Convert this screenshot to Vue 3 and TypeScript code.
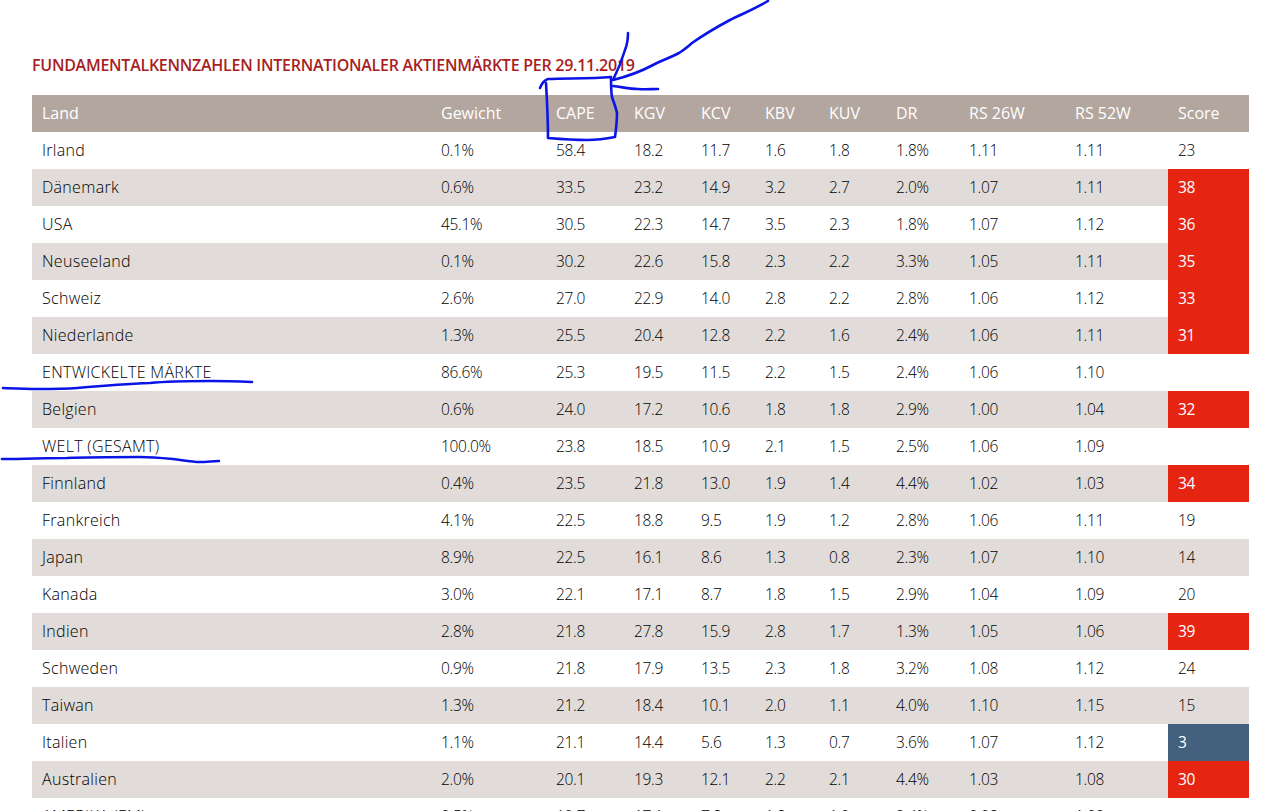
<script setup lang="ts">
interface Row { c: string[]; score: string; tone?: 'red' | 'blue' }
const heads = ['Land', 'Gewicht', 'CAPE', 'KGV', 'KCV', 'KBV', 'KUV', 'DR', 'RS 26W', 'RS 52W', 'Score']
const widths = [399, 115, 78, 67, 64, 64, 67, 73, 106, 103, 81]
const r = (s: string, score: string, tone?: 'red' | 'blue'): Row => ({ c: s.split('|'), score, tone })
const rows: Row[] = [
  r('Irland|0.1%|58.4|18.2|11.7|1.6|1.8|1.8%|1.11|1.11', '23'),
  r('Dänemark|0.6%|33.5|23.2|14.9|3.2|2.7|2.0%|1.07|1.11', '38', 'red'),
  r('USA|45.1%|30.5|22.3|14.7|3.5|2.3|1.8%|1.07|1.12', '36', 'red'),
  r('Neuseeland|0.1%|30.2|22.6|15.8|2.3|2.2|3.3%|1.05|1.11', '35', 'red'),
  r('Schweiz|2.6%|27.0|22.9|14.0|2.8|2.2|2.8%|1.06|1.12', '33', 'red'),
  r('Niederlande|1.3%|25.5|20.4|12.8|2.2|1.6|2.4%|1.06|1.11', '31', 'red'),
  r('ENTWICKELTE MÄRKTE|86.6%|25.3|19.5|11.5|2.2|1.5|2.4%|1.06|1.10', ''),
  r('Belgien|0.6%|24.0|17.2|10.6|1.8|1.8|2.9%|1.00|1.04', '32', 'red'),
  r('WELT (GESAMT)|100.0%|23.8|18.5|10.9|2.1|1.5|2.5%|1.06|1.09', ''),
  r('Finnland|0.4%|23.5|21.8|13.0|1.9|1.4|4.4%|1.02|1.03', '34', 'red'),
  r('Frankreich|4.1%|22.5|18.8|9.5|1.9|1.2|2.8%|1.06|1.11', '19'),
  r('Japan|8.9%|22.5|16.1|8.6|1.3|0.8|2.3%|1.07|1.10', '14'),
  r('Kanada|3.0%|22.1|17.1|8.7|1.8|1.5|2.9%|1.04|1.09', '20'),
  r('Indien|2.8%|21.8|27.8|15.9|2.8|1.7|1.3%|1.05|1.06', '39', 'red'),
  r('Schweden|0.9%|21.8|17.9|13.5|2.3|1.8|3.2%|1.08|1.12', '24'),
  r('Taiwan|1.3%|21.2|18.4|10.1|2.0|1.1|4.0%|1.10|1.15', '15'),
  r('Italien|1.1%|21.1|14.4|5.6|1.3|0.7|3.6%|1.07|1.12', '3', 'blue'),
  r('Australien|2.0%|20.1|19.3|12.1|2.2|2.1|4.4%|1.03|1.08', '30', 'red'),
  r('AMERIKA (EM)|0.5%|19.7|17.1|7.8|1.8|1.9|2.4%|0.98|1.00', ''),
]
</script>

<template>
  <main class="page">
    <h2 class="title">FUNDAMENTALKENNZAHLEN INTERNATIONALER AKTIENMÄRKTE PER 29.11.2019</h2>
    <table class="grid">
      <colgroup>
        <col v-for="(w, i) in widths" :key="i" :style="{ width: w + 'px' }" />
      </colgroup>
      <thead>
        <tr>
          <th v-for="h in heads" :key="h">{{ h }}</th>
        </tr>
      </thead>
      <tbody>
        <tr v-for="row in rows" :key="row.c[0]">
          <td v-for="(v, i) in row.c" :key="i">{{ v }}</td>
          <td :class="row.tone">{{ row.score }}</td>
        </tr>
      </tbody>
    </table>
    <svg class="ink" width="1281" height="811" viewBox="0 0 1281 811" fill="none" stroke="#0a14e6" stroke-width="2.6" stroke-linecap="round" stroke-linejoin="round">
      <path d="M768 1 C755 9 742 14 730 20 C715 28 702 36 692 43 C686 48 684 50 679 53 C670 58 662 60 653 65 C640 72 625 77 613 80 M628 33 C628 40 627 45 625 50 C622 60 618 70 613 80" />
      <path d="M613 86 C622 87 630 89 638 89 C645 89.500 652 89 658 89" />
      <path d="M540 88 C542 83 544 80 548 79 C565 78 590 79 611 77 C611 85 611 92 612 97 C614 103 616 108 617 113 C617 122 616 130 615 137 C605 139 596 140 587 140 C573 140 560 139 548 138 C548 120 547 100 546 83" />
      <path d="M3 388 C15 388.500 25 389 37 389 C50 389 65 389 77 388 C100 386 125 384 150 383 C170 381 190 381 210 381 C225 381 240 381.500 252 382" />
      <path d="M2 459 C25 459 45 458 67 458 C90 457 115 457 140 457 C150 457 162 458 173 459 C182 460 191 462 200 462 C207 462 213 461 219 461" />
    </svg>
  </main>
</template>

<style scoped>
.page {
  position: relative;
  height: 811px;
  box-sizing: border-box;
  padding: 56px 32px 0;
  overflow: hidden;
  font-family: "Open Sans", "Noto Sans", sans-serif;
  color: #000;
}
.title {
  margin: 0 0 20px;
  height: 19px;
  line-height: 19px;
  font-size: 16px;
  font-weight: 600;
  letter-spacing: -0.26px;
  color: #a81e22;
  white-space: nowrap;
}
.grid {
  width: 1217px;
  table-layout: fixed;
  border-collapse: collapse;
  font-size: 15.5px;
  font-weight: 300;
  letter-spacing: -0.3px;
}
th, td {
  height: 37px;
  padding: 0 0 2px 10px;
  text-align: left;
  font-weight: 300;
  box-sizing: border-box;
  white-space: nowrap;
}
td:first-child {
  font-size: 16px;
  letter-spacing: 0.3px;
}
th {
  background: #b3a69e;
  color: #fff;
  font-size: 16px;
  font-weight: 400;
  letter-spacing: 0;
}
tbody tr:nth-child(even) td {
  background: #e1dcd9;
}
tbody tr td.red {
  background: #e62412;
  color: #fff;
  font-weight: 400;
}
tbody tr td.blue {
  background: #43607e;
  color: #fff;
  font-weight: 400;
}
.ink {
  position: absolute;
  left: 0;
  top: 0;
  pointer-events: none;
}
</style>

<style>
html, body {
  margin: 0;
  overflow: hidden;
  background: #fff;
}
</style>
